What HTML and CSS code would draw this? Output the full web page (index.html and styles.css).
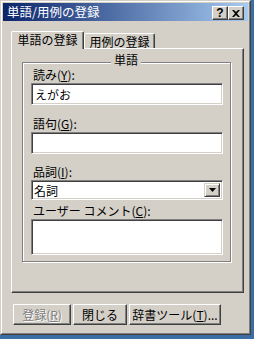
FILE: index.html
```html
<!DOCTYPE html>
<html lang="ja">
<head>
<meta charset="utf-8">
<link rel="stylesheet" href="styles.css">
</head>
<body>
<div class="window">
  <div class="frame">
    <div class="titlebar">
      <span class="title">単語/用例の登録</span>
      <div class="tb-btn help">?</div>
      <div class="tb-btn close"><svg width="8" height="7" viewBox="0 0 8 7"><path d="M0 0H2L4 2L6 0H8L5 3.5L8 7H6L4 5L2 7H0L3 3.5Z" fill="#000"/></svg></div>
    </div>
    <div class="client">
      <div class="tabs">
        <div class="tab active">単語の登録</div>
        <div class="tab">用例の登録</div>
      </div>
      <div class="panel">
        <div class="group">
          <span class="caption">単語</span>
          <div class="label">読み(<u>Y</u>):</div>
          <div class="edit e1">えがお</div>
          <div class="label l2">語句(<u>G</u>):</div>
          <div class="edit e1"></div>
          <div class="label l3">品詞(<u>I</u>):</div>
          <div class="combo">
            <span class="combo-text">名詞</span>
            <div class="drop"><svg width="7" height="4" viewBox="0 0 7 4"><path d="M0 0H7L3.5 4Z" fill="#000"/></svg></div>
          </div>
          <div class="label l4">ユーザー コメント(<u>C</u>):</div>
          <div class="edit area"></div>
        </div>
      </div>
      <div class="buttons">
        <div class="btn disabled w1">登録(<u>R</u>)</div>
        <div class="btn w2">閉じる</div>
        <div class="btn w3">辞書ツール(<u>T</u>)...</div>
      </div>
    </div>
  </div>
</div>
</body>
</html>
```
FILE: styles.css
```css
html, body {
  margin: 0;
  padding: 0;
  background: #3A6EA5;
}
body {
  font-family: "Noto Sans CJK JP", "Noto Sans", sans-serif;
  font-size: 12px;
  color: #000;
}
u { text-decoration: underline; text-underline-offset: 1px; }

.window {
  width: 251px;
  height: 335px;
  box-sizing: border-box;
  background: #D4D0C8;
  border: 1px solid;
  border-color: #D4D0C8 #404040 #404040 #D4D0C8;
  display: flex;
  flex-direction: column;
}
.frame {
  flex: 1;
  border: 1px solid;
  border-color: #FFFFFF #808080 #808080 #FFFFFF;
  padding: 1px;
  display: flex;
  flex-direction: column;
}
.titlebar {
  height: 18px;
  background: linear-gradient(to right, #0A246A, #A6CAF0);
  display: flex;
  align-items: flex-end;
  padding: 0 4px 1px 4px;
  box-sizing: border-box;
}
.title {
  flex: 1;
  color: #fff;
  line-height: 17px;
  align-self: center;
  font-size: 12.5px;
}
.tb-btn {
  width: 16px;
  height: 14px;
  box-sizing: border-box;
  background: #D4D0C8;
  border: 1px solid;
  border-color: #FFFFFF #404040 #404040 #FFFFFF;
  box-shadow: inset -1px -1px 0 #808080;
  display: flex;
  align-items: center;
  justify-content: center;
}
.tb-btn.help {
  font-family: "Liberation Sans", sans-serif;
  font-weight: bold;
  font-size: 12px;
  line-height: 11px;
}

.client {
  flex: 1;
  padding: 10px 0 0 8px;
  display: flex;
  flex-direction: column;
}
.tabs {
  display: flex;
  align-items: flex-end;
  height: 17px;
}
.tab {
  height: 15px;
  width: 71px;
  box-sizing: border-box;
  border-top: 1px solid #fff;
  border-left: 1px solid #fff;
  border-right: 1px solid #404040;
  box-shadow: inset -1px 0 0 #808080;
  border-radius: 2px 2px 0 0;
  text-align: center;
  line-height: 13px;
  padding-top: 1px;
  background: #D4D0C8;
}
.tab.active {
  width: 73px;
  height: 18px;
  margin-bottom: -1px;
  position: relative;
  z-index: 1;
}
.panel {
  width: 233px;
  height: 245px;
  box-sizing: border-box;
  border: 1px solid;
  border-color: #FFFFFF #404040 #404040 #FFFFFF;
  box-shadow: inset -1px -1px 0 #808080;
  padding: 13px 0 0 10px;
}
.group {
  position: relative;
  width: 209px;
  height: 200px;
  box-sizing: border-box;
  border: 1px solid #808080;
  box-shadow: inset 1px 1px 0 #fff, 1px 1px 0 #fff;
  padding: 5px 0 0 8px;
  display: flex;
  flex-direction: column;
  align-items: flex-start;
}
.caption {
  position: absolute;
  top: -10px;
  left: 88px;
  padding: 0 3px;
  background: #D4D0C8;
  line-height: 13px;
}
.label {
  line-height: 13px;
  height: 13px;
  margin-left: 2px;
  margin-bottom: 2px;
  white-space: nowrap;
}
.l2 { margin-top: 12px; }
.l3 { margin-top: 11px; }
.l4 { margin-top: 4px; }
.edit, .combo {
  width: 192px;
  box-sizing: border-box;
  background: #fff;
  border: 1px solid;
  border-color: #808080 #FFFFFF #FFFFFF #808080;
  box-shadow: inset 1px 1px 0 #404040, inset -1px -1px 0 #D4D0C8;
}
.edit.e1 {
  height: 22px;
  padding: 3px 2px 0 3px;
  line-height: 15px;
}
.edit.area {
  height: 36px;
}
.combo {
  height: 20px;
  display: flex;
  align-items: stretch;
  padding: 2px;
}
.combo-text {
  flex: 1;
  line-height: 16px;
}
.drop {
  width: 16px;
  box-sizing: border-box;
  background: #D4D0C8;
  border: 1px solid;
  border-color: #D4D0C8 #404040 #404040 #D4D0C8;
  box-shadow: inset 1px 1px 0 #fff, inset -1px -1px 0 #808080;
  display: flex;
  align-items: center;
  justify-content: center;
}
.buttons {
  display: flex;
  gap: 2px;
  margin: 11px 0 0 2px;
}
.btn {
  height: 21px;
  box-sizing: border-box;
  border: 1px solid;
  border-color: #FFFFFF #404040 #404040 #FFFFFF;
  box-shadow: inset -1px -1px 0 #808080;
  display: flex;
  align-items: center;
  justify-content: center;
  line-height: 13px;
  white-space: nowrap;
}
.btn.disabled {
  color: #808080;
  text-shadow: 1px 1px 0 #fff;
}
.w1 { width: 58px; }
.w2 { width: 54px; }
.w3 { width: 92px; }
```
